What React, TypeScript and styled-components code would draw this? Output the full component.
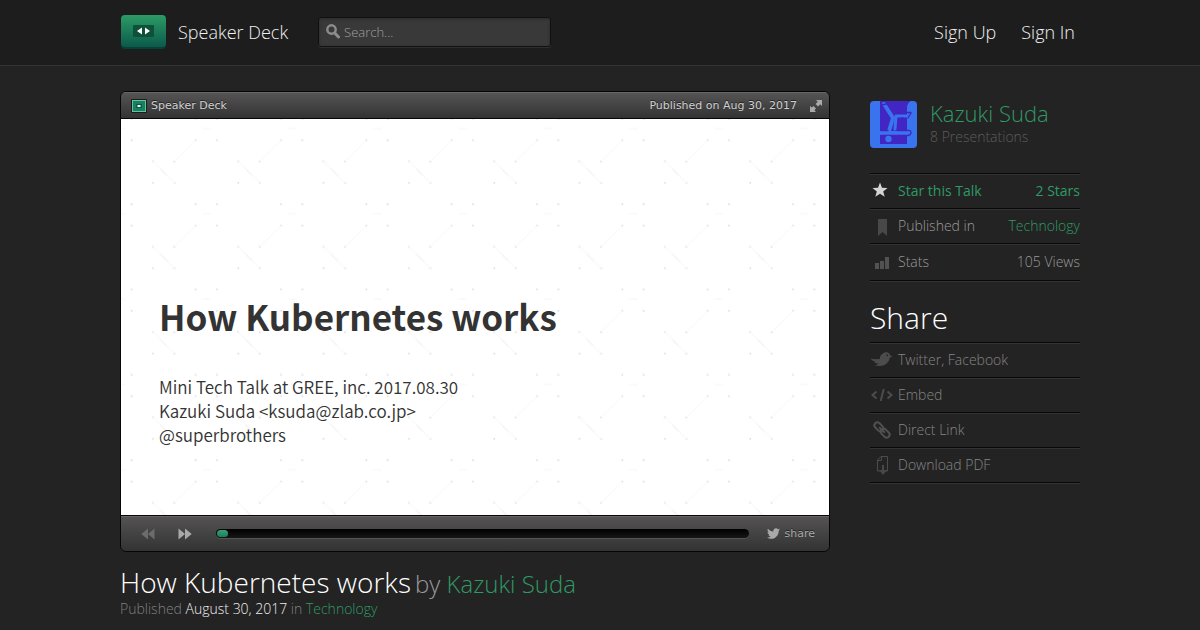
import React from "react";
import styled, { createGlobalStyle } from "styled-components";
import { FaTwitter } from "react-icons/fa";

const GlobalStyle = createGlobalStyle`
  *, *::before, *::after { box-sizing: border-box; }
  body {
    margin: 0;
    background: #232323;
    color: #9a9a9a;
    font-family: "Open Sans", sans-serif;
    font-weight: 300;
    font-size: 14px;
    line-height: 20px;
  }
  a { color: inherit; text-decoration: none; }
  h1, h2, h3, p, ul { margin: 0; padding: 0; font-weight: inherit; }
  ul { list-style: none; }
`;

const Header = styled.header`
  background: #1d1d1d;
  border-bottom: 1px solid #343434;
  padding: 0 16px;
`;

const HeaderInner = styled.div`
  max-width: 960px;
  height: 65px;
  margin: 0 auto;
  padding-bottom: 2px;
  display: flex;
  align-items: center;
`;

const Brand = styled.a`
  display: flex;
  align-items: center;
  gap: 12px;
  margin-right: 30px;
  color: #f0f0f0;
  font-size: 18px;
  line-height: 24px;
  svg { display: block; }
`;

const SearchBox = styled.label`
  display: flex;
  align-items: center;
  gap: 4px;
  width: 233px;
  height: 30px;
  padding: 0 7px;
  background: #393939;
  border: 1px solid #111;
  border-radius: 3px;
  box-shadow: inset 0 1px 3px #2a2a2a, 0 1px 0 #2f2f2f;
`;

const SearchInput = styled.input`
  flex: 1;
  min-width: 0;
  padding: 0;
  border: 0;
  outline: 0;
  background: transparent;
  color: #ccc;
  font: 300 13px/20px "Open Sans", sans-serif;
  &::placeholder { color: #a0a0a0; opacity: 1; }
`;

const Account = styled.nav`
  display: flex;
  gap: 25px;
  margin-left: auto;
  padding-right: 5px;
  color: #f0f0f0;
  font-size: 18px;
  line-height: 24px;
`;

const Page = styled.div`
  padding: 0 16px;
`;

const Columns = styled.div`
  max-width: 960px;
  margin: 0 auto;
  padding-top: 25px;
  display: flex;
  gap: 40px;
  align-items: flex-start;
`;

const Main = styled.main`
  flex: 1;
  min-width: 0;
`;

const Player = styled.section`
  border: 1px solid #060606;
  border-radius: 6px;
  overflow: hidden;
  color: #d0d0d0;
  font: 400 11px/16px "DejaVu Sans", sans-serif;
  text-shadow: 0 -1px 0 #222;
`;

const TopBar = styled.div`
  display: flex;
  align-items: center;
  height: 27px;
  padding: 2px 6px 0 10px;
  background: linear-gradient(#575556, #333);
  box-shadow: inset 0 1px 0 #666;
  border-bottom: 1px solid #060606;
`;

const PlayerName = styled.a`
  display: flex;
  align-items: center;
  gap: 4px;
`;

const PublishedOn = styled.span`
  margin-left: auto;
  margin-right: 12px;
`;

const IconButton = styled.button<{ $dim?: boolean }>`
  display: flex;
  align-items: center;
  gap: 5px;
  padding: 0;
  border: 0;
  background: none;
  color: ${(p) => (p.$dim ? "#6c6c6c" : "#a9a9a9")};
  font: inherit;
  text-shadow: inherit;
  cursor: pointer;
`;

const Slide = styled.div`
  display: grid;
  background: #fff;
  aspect-ratio: 708 / 396;
  overflow: hidden;
  > * { grid-area: 1 / 1; min-width: 0; min-height: 0; }
  > svg { width: 100%; height: 100%; }
`;

const SlideText = styled.div`
  align-self: end;
  padding: 0 38px 68px;
  color: #333;
  font-family: "Noto Sans CJK JP", sans-serif;
  font-weight: 350;
  font-size: 17px;
  line-height: 24px;
  text-shadow: none;
`;

const SlideTitle = styled.h2`
  margin-bottom: 31px;
  font-size: 35px;
  line-height: 56px;
  font-weight: 700;
`;

const Controls = styled.div`
  display: flex;
  align-items: center;
  height: 36px;
  padding: 0 14px 0 20px;
  background: linear-gradient(#555354, #333);
  border-top: 1px solid #060606;
  box-shadow: inset 0 1px 0 #666;
`;

const Steps = styled.div`
  display: flex;
  gap: 23px;
  margin-right: 24px;
`;

const Scrubber = styled.input`
  appearance: none;
  flex: 1;
  min-width: 0;
  height: 9px;
  margin: 0 18px 0 0;
  padding: 0 1px;
  border-radius: 5px;
  background: linear-gradient(#000, #161616);
  box-shadow: 0 1px 0 #555;
  &::-webkit-slider-thumb {
    appearance: none;
    width: 11px;
    height: 7px;
    border-radius: 4px;
    background: linear-gradient(#35a277, #1b7f5c);
  }
`;

const TalkTitle = styled.h1`
  display: flex;
  flex-wrap: wrap;
  align-items: baseline;
  gap: 0 4px;
  margin-top: 13px;
  color: #fff;
  font-size: 28px;
  line-height: 34px;
`;

const Author = styled.span`
  color: #9a9a9a;
  font-size: 24px;
`;

const Green = styled.a`
  color: #2f9a65;
`;

const Meta = styled.p`
  color: #808080;
  line-height: 16px;
  strong { color: #f0f0f0; font-weight: 300; }
`;

const Sidebar = styled.aside`
  flex: 0 0 210px;
  padding-top: 10px;
`;

const Profile = styled.div`
  display: flex;
  gap: 13px;
  margin-bottom: 25px;
  svg { display: block; border-radius: 4px; }
`;

const ProfileName = styled.h2`
  margin-bottom: 2px;
  font-size: 22px;
  line-height: 24px;
`;

const Count = styled.p`
  color: #5c5c5c;
`;

const List = styled.ul`
  border-bottom: 1px solid #080808;
  box-shadow: 0 1px 0 #333;
`;

const Row = styled.li<{ $tone?: "star" | "muted"; $tall?: boolean }>`
  display: flex;
  align-items: center;
  height: ${(p) => (p.$tall ? 37 : 35)}px;
  border-top: 1px solid #080808;
  box-shadow: inset 0 1px 0 #333;
  color: ${(p) => (p.$tone === "star" ? "#2f9a65" : p.$tone === "muted" ? "#858585" : "#9a9a9a")};
  font-weight: ${(p) => (p.$tone === "star" ? 400 : 300)};
  > :last-child:not(:first-child) { margin-left: auto; }
`;

const RowLabel = styled.span`
  display: flex;
  align-items: center;
  gap: 4px;
  svg { flex: none; }
`;

const ShareTitle = styled.h2`
  margin: 16px 0 3px;
  color: #fff;
  font-size: 30px;
  line-height: 42px;
`;

const Logo = () => (
  <svg width="46" height="37" viewBox="0 -2 46 37" aria-hidden="true">
    <defs>
      <linearGradient id="logo" x2="0" y2="1">
        <stop stopColor="#2d9b65" />
        <stop offset="1" stopColor="#0b5a4c" />
      </linearGradient>
    </defs>
    <rect x="1" y="1" width="45" height="33" rx="4" fill="#084136" />
    <rect x="1" width="45" height="32" rx="4" fill="url(#logo)" />
    <rect x="13" y="10" width="21" height="12" rx="1" fill="#0d5238" />
    <path d="M17 16l5-3.500v7zM30 16l-5-3.500v7z" fill="#fff" />
  </svg>
);

const MiniLogo = () => (
  <svg width="16" height="14" viewBox="0 0 16 14" aria-hidden="true">
    <rect width="16" height="14" rx="1" fill="#1c1c1c" />
    <rect x="1.500" y="1.500" width="13" height="11" fill="#188062" stroke="#63c49b" />
    <rect x="5" y="5" width="6" height="4" rx="1" fill="#075240" />
    <path d="M5.500 7L8 5.700 10.500 7 8 8.300z" fill="#fff" />
  </svg>
);

const SearchIcon = () => (
  <svg width="14" height="15" viewBox="0 0 14 15" fill="none" stroke="#8c8c8c" aria-hidden="true">
    <circle cx="5.500" cy="5.500" r="4.200" strokeWidth="2.400" />
    <path d="M9 9.200l3.500 3.800" strokeWidth="3" strokeLinecap="round" />
  </svg>
);

const ExpandIcon = () => (
  <svg width="14" height="14" viewBox="0 0 14 14" fill="currentColor" aria-hidden="true">
    <path d="M7 1h6v6l-1.800-1.800L9 7.400 6.600 5l2.200-2.200zM1 7l1.800 1.600L4.500 7 7 9.500 5.400 11.200 7 13H1z" />
  </svg>
);

const StepIcon = ({ back }: { back?: boolean }) => (
  <svg width="14" height="12" viewBox="0 0 14 12" fill="currentColor" aria-hidden="true">
    <path d={back ? "M7 .5v11L.3 6zM13.500.5v11L7 6z" : "M.5.5v11L7 6zM7 .5v11L13.700 6z"} />
  </svg>
);

const Avatar = () => (
  <svg width="47" height="47" viewBox="0 0 47 47" role="img" aria-label="Kazuki Suda">
    <rect width="47" height="47" fill="#3973ee" />
    <path d="M10 0h31q-4 2-4 7v36h-27z" fill="#4126c4" />
    <g fill="none" strokeLinecap="round" strokeLinejoin="round">
      <path d="M14 3l9 14-4 13" stroke="#3973ee" strokeWidth="4" />
      <path d="M25 28l1-13h12" stroke="#3973ee" strokeWidth="3" />
      <path d="M8 32h30" stroke="#3973ee" strokeWidth="4" />
      <path d="M12 4l8-2M27 11.500h14M28 28l1-10 4-1M41 12l-3 5M11 29.500h7M11 34.500h27q3-.5 3-3t-3-2H28" stroke="#4126c4" strokeWidth="1.300" />
    </g>
    <circle cx="18.500" cy="38" r="3.200" fill="#3973ee" />
  </svg>
);

const SlidePattern = () => (
  <svg viewBox="0 0 708 396" preserveAspectRatio="xMidYMid slice" aria-hidden="true">
    <defs>
      <pattern id="grid" width="85.330" height="85.330" patternUnits="userSpaceOnUse" x="5" y="15.500">
        <g fill="#dedede">
          {[[5.7, 5.7], [69.7, 5.7], [27, 27], [48.4, 27], [27, 48.4], [48.4, 48.4], [5.7, 69.7], [69.7, 69.7]].map(
            ([x, y]) => (
              <circle key={`${x}-${y}`} cx={x} cy={y} r="1" />
            )
          )}
        </g>
        <path d="M69.700 5.700L48.400 27M27 27l21.400 21.400M76 80q5-2 9 0" fill="none" stroke="#f8f8f8" />
        <path d="M34 34l7 7" stroke="#f0f0f0" />
      </pattern>
    </defs>
    <rect width="708" height="396" fill="url(#grid)" />
  </svg>
);

const RowIcon = ({ children, color = "#484848" }: { children: React.ReactNode; color?: string }) => (
  <svg width="24" height="22" viewBox="0 0 24 22" fill={color} aria-hidden="true">
    {children}
  </svg>
);

const icons = {
  star: (
    <RowIcon color="#d4d4d4">
      <path d="M10 2.500l2 5.200 5.500.2-4.300 3.500 1.500 5.400L10 13.700l-4.700 3.100 1.500-5.400-4.300-3.500 5.500-.2z" />
    </RowIcon>
  ),
  bookmark: (
    <RowIcon>
      <path d="M8 4h9v17l-4.500-4L8 21z" />
    </RowIcon>
  ),
  stats: (
    <RowIcon color="#525252">
      <path d="M5 12h4v6H5zM10 10h4v8h-4zM15 6h4v12h-4z" />
    </RowIcon>
  ),
  bird: (
    <RowIcon color="#4c4c4c">
      <path d="M.5 9.500C4 10.500 7 10 10 10 9.500 8 10.500 5.500 13 4.500 14.500 3.200 17.500 2.700 19 4.300 19.700 5 20 6 20.200 6.500L22.700 7.300 20 8.500C19 13 16 16.200 11.500 16.800 9 17.200 6.500 17 4.500 16.200 6.500 16 7.700 15.500 8.500 14.800 6.500 14.700 5.200 14 4.300 13L5.500 12.700C3 12.200 1.500 11 .5 9.500ZM17.200 5.500a.8.8 0 1 0 .01 0Z" fillRule="evenodd" />
    </RowIcon>
  ),
  embed: (
    <RowIcon>
      <path d="M6.500 7.500L2.500 11l4 3.500M17.500 7.500l4 3.500-4 3.500M13.700 5l-3 12" fill="none" stroke="#4c4c4c" strokeWidth="2" />
    </RowIcon>
  ),
  link: (
    <RowIcon>
      <g transform="rotate(45 12 11)" fill="none" stroke="#505050" strokeWidth="2">
        <rect x="2.500" y="8" width="10" height="6" rx="3" />
        <rect x="11.500" y="8" width="10" height="6" rx="3" />
        <path d="M8 11h8" />
      </g>
    </RowIcon>
  ),
  download: (
    <RowIcon>
      <path d="M10 17H7.500V6L11 2.500h6.500V17H15M7.500 6.500h4V2.500" fill="none" stroke="#4c4c4c" />
      <path d="M12 11h2v5h3l-4 5-4-5h3z" />
    </RowIcon>
  ),
};

const shareRows: [keyof typeof icons, string][] = [
  ["bird", "Twitter, Facebook"],
  ["embed", "Embed"],
  ["link", "Direct Link"],
  ["download", "Download PDF"],
];

export default function App() {
  return (
    <>
      <GlobalStyle />
      <Header>
        <HeaderInner>
          <Brand href="#">
            <Logo />
            Speaker Deck
          </Brand>
          <SearchBox>
            <SearchIcon />
            <SearchInput type="text" placeholder="Search..." aria-label="Search" />
          </SearchBox>
          <Account>
            <a href="#signup">Sign Up</a>
            <a href="#signin">Sign In</a>
          </Account>
        </HeaderInner>
      </Header>
      <Page>
        <Columns>
          <Main>
            <Player>
              <TopBar>
                <PlayerName href="#">
                  <MiniLogo />
                  Speaker Deck
                </PlayerName>
                <PublishedOn>Published on Aug 30, 2017</PublishedOn>
                <IconButton aria-label="Full screen">
                  <ExpandIcon />
                </IconButton>
              </TopBar>
              <Slide>
                <SlidePattern />
                <SlideText>
                  <SlideTitle>How Kubernetes works</SlideTitle>
                  <p>Mini Tech Talk at GREE, inc. 2017.08.30</p>
                  <p>Kazuki Suda &lt;ksuda@zlab.co.jp&gt;</p>
                  <p>@superbrothers</p>
                </SlideText>
              </Slide>
              <Controls>
                <Steps>
                  <IconButton $dim aria-label="Previous slide">
                    <StepIcon back />
                  </IconButton>
                  <IconButton aria-label="Next slide">
                    <StepIcon />
                  </IconButton>
                </Steps>
                <Scrubber type="range" min={1} max={40} defaultValue={1} aria-label="Slide" />
                <IconButton>
                  <FaTwitter size={13} aria-hidden />
                  share
                </IconButton>
              </Controls>
            </Player>
            <TalkTitle>
              How Kubernetes works
              <Author>
                by <Green href="#author">Kazuki Suda</Green>
              </Author>
            </TalkTitle>
            <Meta>
              Published <strong>August 30, 2017</strong> in <Green href="#technology">Technology</Green>
            </Meta>
          </Main>
          <Sidebar>
            <Profile>
              <Avatar />
              <div>
                <ProfileName>
                  <Green href="#author">Kazuki Suda</Green>
                </ProfileName>
                <Count>8 Presentations</Count>
              </div>
            </Profile>
            <List>
              <Row $tone="star">
                <RowLabel as="a" href="#star">
                  {icons.star}
                  Star this Talk
                </RowLabel>
                <a href="#stars">2 Stars</a>
              </Row>
              <Row>
                <RowLabel>
                  {icons.bookmark}
                  Published in
                </RowLabel>
                <Green href="#technology">Technology</Green>
              </Row>
              <Row $tall>
                <RowLabel>
                  {icons.stats}
                  Stats
                </RowLabel>
                <span>105 Views</span>
              </Row>
            </List>
            <ShareTitle>Share</ShareTitle>
            <List>
              {shareRows.map(([icon, label]) => (
                <Row key={label} $tone="muted">
                  <RowLabel as="a" href={`#${icon}`}>
                    {icons[icon]}
                    {label}
                  </RowLabel>
                </Row>
              ))}
            </List>
          </Sidebar>
        </Columns>
      </Page>
    </>
  );
}
